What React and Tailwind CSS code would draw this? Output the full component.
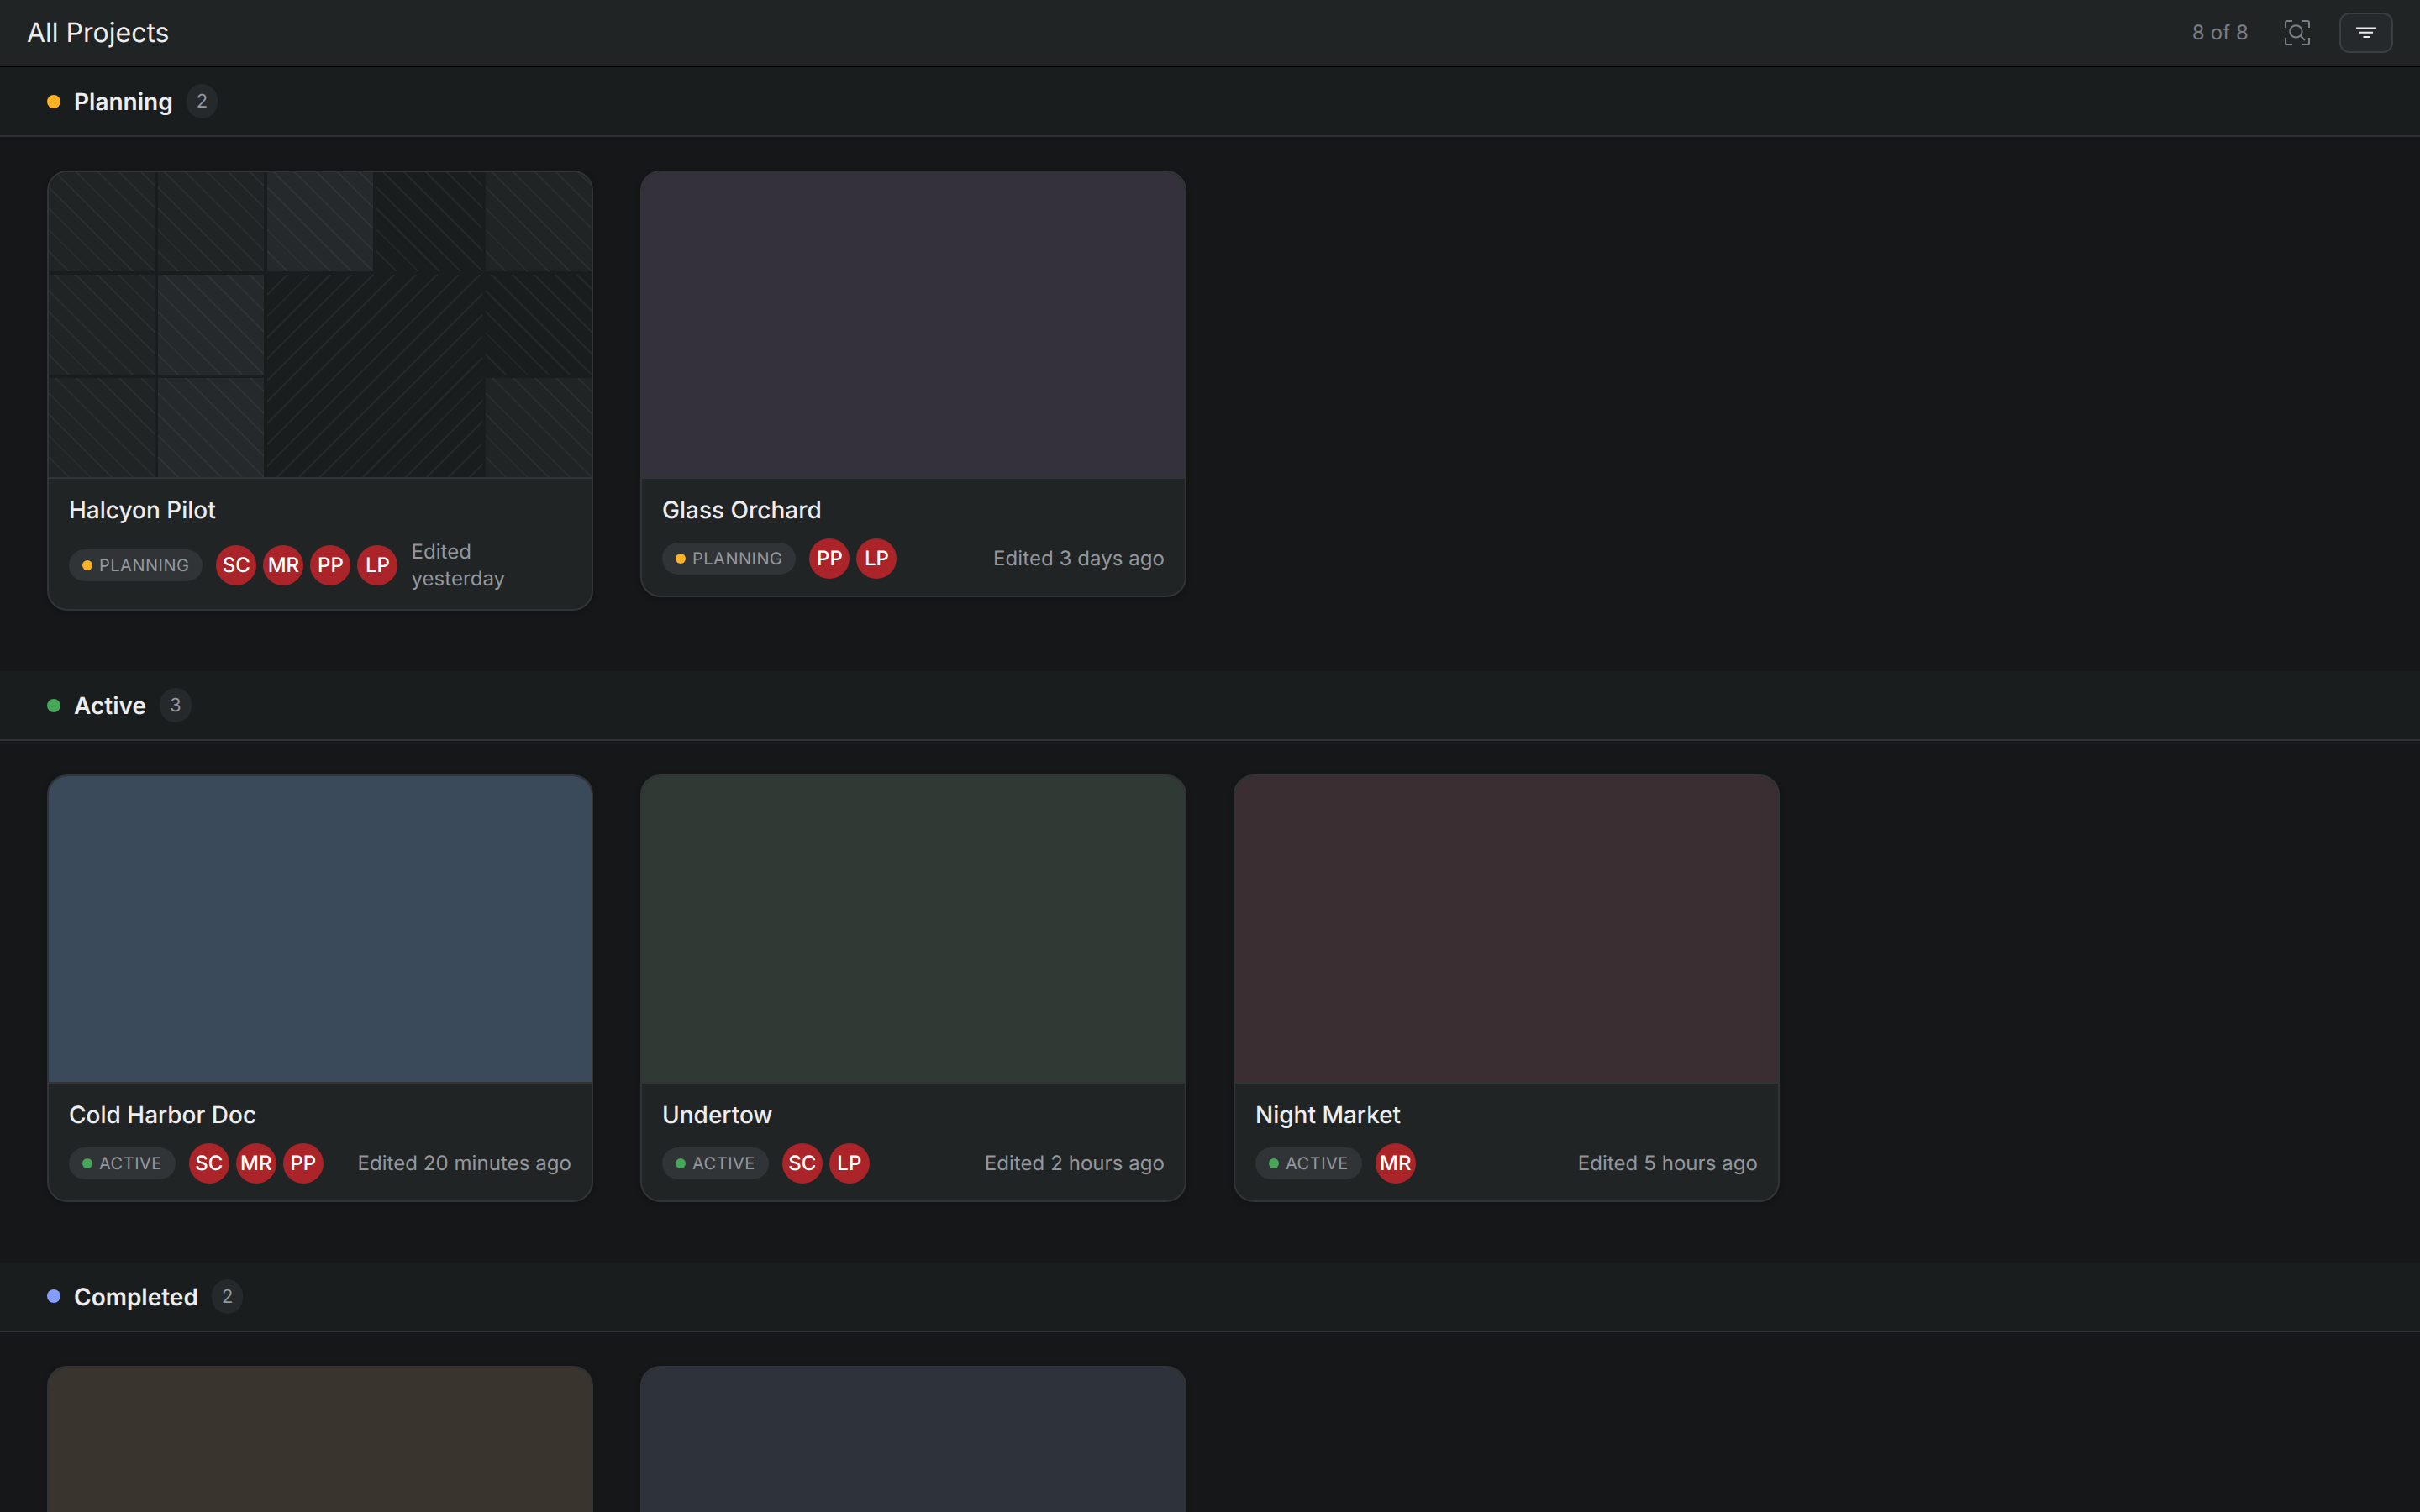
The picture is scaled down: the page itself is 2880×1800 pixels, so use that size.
const DOT = {
  planning: 'bg-[#ffb224]',
  active: 'bg-[#46a758]',
  completed: 'bg-[#849dff]',
};

const SECTIONS = [
  {
    status: 'planning',
    title: 'Planning',
    projects: [
      { name: 'Halcyon Pilot', people: ['SC', 'MR', 'PP', 'LP'], edited: 'Edited\nyesterday' },
      { name: 'Glass Orchard', people: ['PP', 'LP'], edited: 'Edited 3 days ago', cover: 'bg-[#34313a]' },
    ],
  },
  {
    status: 'active',
    title: 'Active',
    projects: [
      { name: 'Cold Harbor Doc', people: ['SC', 'MR', 'PP'], edited: 'Edited 20 minutes ago', cover: 'bg-[#3b4a5a]' },
      { name: 'Undertow', people: ['SC', 'LP'], edited: 'Edited 2 hours ago', cover: 'bg-[#2f3a34]' },
      { name: 'Night Market', people: ['MR'], edited: 'Edited 5 hours ago', cover: 'bg-[#3a2e32]' },
    ],
  },
  {
    status: 'completed',
    title: 'Completed',
    projects: [{ cover: 'bg-[#3a342e]' }, { cover: 'bg-[#2e323a]' }],
  },
];

const STRIPES =
  'bg-[repeating-linear-gradient(45deg,transparent_0,transparent_16px,#292d2e_16px,#292d2e_18px)]';
const STRIPES_RAISED =
  'bg-[repeating-linear-gradient(45deg,transparent_0,transparent_16px,#2e3234_16px,#2e3234_18px)]';
const STRIPES_DIM =
  'bg-[repeating-linear-gradient(45deg,transparent_0,transparent_16px,#242829_16px,#242829_18px)]';
const STRIPES_REVERSED =
  'bg-[repeating-linear-gradient(135deg,transparent_0,transparent_16px,#242829_16px,#242829_18px)]';

const SURFACE = `bg-[#212425] ${STRIPES}`;
const RAISED = `bg-[#25292c] ${STRIPES_RAISED}`;
const SUNKEN = STRIPES_DIM;

const CELLS = [
  SURFACE,
  SURFACE,
  RAISED,
  SUNKEN,
  SURFACE,
  SURFACE,
  RAISED,
  `col-span-2 row-span-2 ${STRIPES_REVERSED}`,
  SUNKEN,
  SURFACE,
  RAISED,
  SURFACE,
];

function EmptyCover() {
  return (
    <div className="grid h-full grid-cols-5 grid-rows-3 gap-1 bg-[#1a1d1e]">
      {CELLS.map((cell, i) => (
        <div key={i} className={cell} />
      ))}
    </div>
  );
}

function Edited({ text }) {
  const align = text.includes('\n') ? '' : 'ml-auto';
  return (
    <span className={`text-[24px] leading-8 tracking-[0.06px] whitespace-pre-line text-[#94989d] ${align}`}>
      {text}
    </span>
  );
}

function ProjectCard({ project, status }) {
  return (
    <article className="overflow-hidden rounded-3xl border-2 border-[#313538] bg-[#212425] shadow-[0_2px_6px_rgba(0,0,0,0.2)]">
      <div className="border-b-2 border-[#313538]">
        <div className={`aspect-video ${project.cover ?? ''}`}>{!project.cover && <EmptyCover />}</div>
      </div>
      {project.name && (
        <div className="flex flex-col gap-4 px-6 py-5">
          <h3 className="text-[28px] leading-[35px] font-medium text-[#ededef]">{project.name}</h3>
          <div className="flex items-center gap-4">
            <span className="flex shrink-0 items-center gap-2 rounded-full bg-[#303437] px-4 py-1 text-[20px] leading-[30px] tracking-[0.5px] text-[#94989d] uppercase">
              <span className={`size-3 rounded-full ${DOT[status]}`} />
              {status}
            </span>
            <div className="flex shrink-0 gap-2">
              {project.people.map((p) => (
                <span
                  key={p}
                  className="flex size-12 items-center justify-center rounded-full bg-[#aa2429] text-[24px] leading-none font-medium text-white"
                >
                  {p}
                </span>
              ))}
            </div>
            <Edited text={project.edited} />
          </div>
        </div>
      )}
    </article>
  );
}

function Section({ section }) {
  return (
    <section>
      <div className="flex items-center gap-4 border-b-2 border-[#2e3234] bg-[#1a1d1e] px-14 py-5">
        <span className={`size-4 rounded-full ${DOT[section.status]}`} />
        <h2 className="pt-0.5 text-[28px] leading-[35px] font-semibold text-[#ededef]">{section.title}</h2>
        <span className="rounded-full bg-[#25292c] px-3 pt-[5px] pb-[3px] text-[22px] leading-[33px] text-[#94989d]">
          {section.projects.length}
        </span>
      </div>
      <div className="grid grid-cols-4 items-start gap-14 px-14 pt-10 pb-[72px]">
        {section.projects.map((p) => (
          <ProjectCard key={p.cover ?? 'empty'} project={p} status={section.status} />
        ))}
      </div>
    </section>
  );
}

function ScanSearchIcon() {
  return (
    <svg width="32" height="32" viewBox="0 0 32 32" fill="none" stroke="currentColor" strokeWidth="2">
      <path d="M2 10V4a2 2 0 0 1 2-2h6M22 2h6a2 2 0 0 1 2 2v6M30 22v6a2 2 0 0 1-2 2h-6M10 30H4a2 2 0 0 1-2-2v-6" />
      <circle cx="14.4" cy="14.4" r="7.2" />
      <path d="m19.500 19.500 5.500 5.500" />
    </svg>
  );
}

function FilterIcon() {
  return (
    <svg width="28" height="28" viewBox="0 0 28 28" fill="none" stroke="currentColor" strokeWidth="2">
      <path d="M2 8.400h24M6 13.800h16M10.500 19h7.500" />
    </svg>
  );
}

export default function App() {
  return (
    <div className="flex h-[1800px] w-[2880px] flex-col overflow-hidden bg-[#161718] font-['Inter',sans-serif] [text-rendering:geometricPrecision]">
      <header className="flex h-20 shrink-0 items-center justify-between border-b-2 border-black bg-[#212425] px-8">
        <h1 className="text-[32px] leading-10 font-normal text-[#ededef]">All Projects</h1>
        <div className="flex items-center">
          <span className="mr-[42px] text-[24px] leading-8 tracking-[0.12px] text-[#787f85]">8 of 8</span>
          <span className="mr-[34px] text-[#787f85]">
            <ScanSearchIcon />
          </span>
          <button className="flex h-12 w-16 items-center justify-center rounded-xl border-2 border-[#3a3f42] bg-[#25292c] text-[#ededef]">
            <FilterIcon />
          </button>
        </div>
      </header>
      <main className="min-h-0 flex-1 overflow-hidden">
        {SECTIONS.map((s) => (
          <Section key={s.status} section={s} />
        ))}
      </main>
    </div>
  );
}
